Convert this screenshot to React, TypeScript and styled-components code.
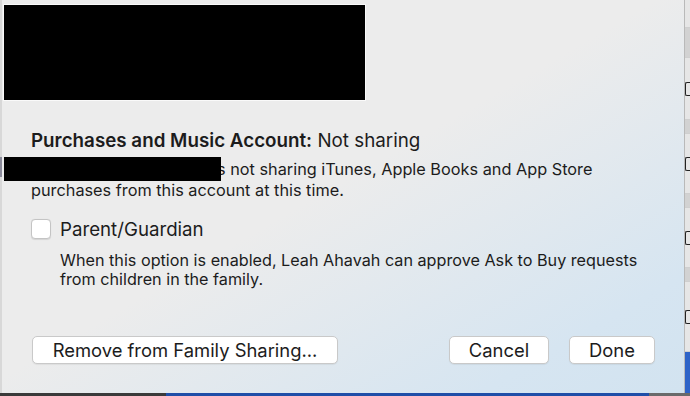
import { createGlobalStyle, styled } from "styled-components";

const GlobalStyle = createGlobalStyle`
	html, body {
		margin: 0;
		padding: 0;
		background: #dcdcdc;
		overflow: hidden;
	}
	* {
		box-sizing: border-box;
	}
`;

const Screen = styled.div`
	display: flex;
	flex-direction: column;
	width: 690px;
	height: 396px;
	font-family: Inter, "Liberation Sans", sans-serif;
	color: #1c1c1c;
`;

const MainRow = styled.div`
	display: flex;
	height: 393px;
`;

const BehindLeft = styled.div`
	width: 2px;
	background: linear-gradient(#d8d8d8 0 40%, #8a8a9a 40% 45%, #d8d8d8 45%);
`;

const BehindRight = styled.div`
	display: flex;
	flex-direction: column;
	width: 6px;
	background: #e4e4e4;
	border-left: 1px solid #b9b9b9;
`;

const BehindCell = styled.div<{ $h: number; $shade?: boolean; $box?: boolean }>`
	height: ${({ $h }) => $h}px;
	background: ${({ $shade }) => ($shade ? "#d2d2d2" : "#e6e6e6")};
	border-bottom: 1px solid #cfcfcf;
	display: flex;
	align-items: center;

	&::before {
		content: "";
		display: ${({ $box }) => ($box ? "block" : "none")};
		width: 5px;
		height: 12px;
		border: 1.5px solid #222;
		border-right: none;
		border-radius: 2px 0 0 2px;
	}
`;

const BehindBlue = styled.div`
	flex: 1;
	background: #2d63c8;
`;

const BehindBottom = styled.div`
	height: 3px;
	background: linear-gradient(
		90deg,
		#3a3a3a 0 24%,
		#1f4ea8 24% 94%,
		#6a6a6a 94%
	);
`;

const Sheet = styled.div`
	width: 682px;
	display: flex;
	flex-direction: column;
	padding: 5px 29px 29px 2px;
	background: linear-gradient(
		to bottom right,
		#ececec 0%,
		#ececec 48%,
		#d6e5f1 85%,
		#d2e3f0 100%
	);
`;

const RedactedHeader = styled.div`
	width: 361px;
	height: 95px;
	background: #000;
	box-shadow: 0 0 0 1px #fafafa;
`;

const Content = styled.div`
	padding-left: 27px;
	display: flex;
	flex-direction: column;
`;

const Title = styled.div`
	margin-top: 30px;
	font-size: 18.8px;
	line-height: 22px;

	b {
		font-weight: 600;
	}
`;

const Body = styled.p`
	margin: 5px 0 0;
	font-size: 16.3px;
	line-height: 18.5px;
`;

const Redaction = styled.span`
	display: inline-block;
	width: 217px;
	height: 24px;
	margin: 0 -4px 0 -27px;
	vertical-align: -6px;
	background: #000;
	position: relative;
	z-index: 1;
`;

const CheckRow = styled.label`
	display: flex;
	align-items: center;
	gap: 9px;
	margin-top: 19px;
	font-size: 18.7px;
	line-height: 21px;
`;

const CheckBox = styled.span`
	width: 20px;
	height: 20px;
	border-radius: 4px;
	background: #fff;
	border: 1px solid #c4c4c4;
	box-shadow: 0 0.5px 1px rgba(0, 0, 0, 0.1);
`;

const Description = styled.p`
	margin: 11px 0 0;
	padding-left: 29px;
	font-size: 16.2px;
	line-height: 19px;
`;

const ButtonRow = styled.div`
	margin-top: auto;
	display: flex;
	align-items: center;
	padding-left: 28px;
`;

const Spacer = styled.div`
	flex: 1;
`;

const Button = styled.button<{ $w: number; $gap?: number }>`
	width: ${({ $w }) => $w}px;
	height: 28px;
	margin-left: ${({ $gap }) => $gap ?? 0}px;
	border-radius: 5px;
	border: 1px solid #c9c9c9;
	background: #fff;
	box-shadow: 0 1px 1px rgba(0, 0, 0, 0.06);
	font-family: Inter, "Liberation Sans", sans-serif;
	font-size: 18.4px;
	color: #1c1c1c;
	padding: 0;
`;

const behindRows = [
	{ h: 28 },
	{ h: 30, shade: true },
	{ h: 62, box: true },
	{ h: 14, shade: true },
	{ h: 60, box: true },
	{ h: 14, shade: true },
	{ h: 60, box: true },
	{ h: 14, shade: true },
	{ h: 70, box: true },
];

export default function App() {
	return (
		<Screen>
			<GlobalStyle />
			<MainRow>
				<BehindLeft />
				<Sheet>
					<RedactedHeader />
					<Content>
						<Title>
							<b>Purchases and Music Account:</b> Not sharing
						</Title>
						<Body>
							<Redaction />s not sharing iTunes, Apple Books and App Store
							<br />
							purchases from this account at this time.
						</Body>
						<CheckRow>
							<CheckBox />
							Parent/Guardian
						</CheckRow>
						<Description>
							When this option is enabled, Leah Ahavah can approve Ask to Buy
							requests
							<br />
							from children in the family.
						</Description>
					</Content>
					<ButtonRow>
						<Button $w={306}>Remove from Family Sharing...</Button>
						<Spacer />
						<Button $w={100}>Cancel</Button>
						<Button $w={86} $gap={20}>
							Done
						</Button>
					</ButtonRow>
				</Sheet>
				<BehindRight>
					{behindRows.map((r, i) => (
						<BehindCell key={i} $h={r.h} $shade={r.shade} $box={r.box} />
					))}
					<BehindBlue />
				</BehindRight>
			</MainRow>
			<BehindBottom />
		</Screen>
	);
}
